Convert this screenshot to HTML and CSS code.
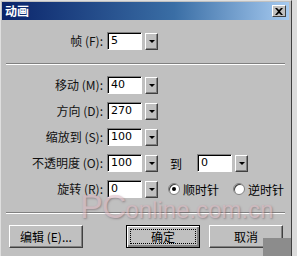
FILE: index.html
```html
<!DOCTYPE html>
<html lang="zh-CN">
<head>
    <meta charset="UTF-8">
    <title>动画</title>
    <link rel="stylesheet" href="styles.css">
</head>
<body>
    <div class="window">
        <div class="titlebar">
            <span class="title">动画</span>
            <button class="close-btn">
                <svg width="8" height="7" viewBox="0 0 8 7"><path d="M0 0h2l2 2 2-2h2L5 3.5 8 7H6L4 5 2 7H0l3-3.5z" fill="#000"/></svg>
            </button>
        </div>

        <div class="body">
            <div class="form top">
                <label class="lbl">帧 (F):</label>
                <div class="field"><div class="input">5</div><div class="drop"></div></div>
            </div>

            <div class="sep"></div>

            <div class="form rows">
                <label class="lbl">移动 (M):</label>
                <div class="field"><div class="input">40</div><div class="drop"></div></div>

                <label class="lbl">方向 (D):</label>
                <div class="field"><div class="input">270</div><div class="drop"></div></div>

                <label class="lbl">缩放到 (S):</label>
                <div class="field"><div class="input">100</div><div class="drop"></div></div>

                <label class="lbl">不透明度 (O):</label>
                <div class="field">
                    <div class="input">100</div><div class="drop"></div>
                    <span class="to">到</span>
                    <div class="input">0</div><div class="drop"></div>
                </div>

                <label class="lbl">旋转 (R):</label>
                <div class="field">
                    <div class="input">0</div><div class="drop"></div>
                    <span class="radio on"></span><span class="radio-text">顺时针</span>
                    <span class="radio"></span><span class="radio-text">逆时针</span>
                </div>
            </div>

            <div class="sep"></div>

            <div class="buttons">
                <button class="btn">编辑 (E)...</button>
                <div class="spacer"></div>
                <button class="btn default"><span class="focus">确定</span></button>
                <button class="btn">取消</button>
            </div>
        </div>

        <div class="watermark"><span class="pc">PC</span>online.com.cn</div>
        <div class="grip"></div>
    </div>
</body>
</html>
```

FILE: styles.css
```css
* {
    box-sizing: border-box;
}

body {
    margin: 0;
    padding: 0;
    background-color: #dcdcdc;
    font-family: "Noto Sans CJK SC", "DejaVu Sans", sans-serif;
    font-size: 12px;
    color: #000;
}

.window {
    width: 292px;
    height: 256px;
    background-color: #c0c0c0;
    border-top: 1px solid #dfdfdf;
    border-left: 1px solid #dfdfdf;
    border-right: 1px solid #404040;
    padding: 1px 2px 0 1px;
    position: relative;
    overflow: hidden;
}

.titlebar {
    height: 18px;
    background: linear-gradient(to right, #0a246a, #3a6ea5 60%, #a6caf0);
    display: flex;
    align-items: center;
    justify-content: space-between;
    padding: 0 3px 0 3px;
}

.title {
    color: #fff;
    font-weight: bold;
    font-size: 12px;
    line-height: 18px;
}

.close-btn {
    width: 14px;
    height: 12px;
    padding: 0;
    background-color: #c0c0c0;
    border: 1px solid;
    border-color: #fff #404040 #404040 #fff;
    display: flex;
    align-items: center;
    justify-content: center;
}

.body {
    padding: 12px 6px 0 6px;
}

.form {
    display: grid;
    grid-template-columns: 95px 1fr;
    column-gap: 4px;
    align-items: center;
}

.rows {
    row-gap: 8px;
}

.lbl {
    text-align: right;
    line-height: 18px;
    white-space: nowrap;
    color: #111;
}

.field {
    display: flex;
    align-items: center;
    height: 18px;
    white-space: nowrap;
}

.input {
    flex: none;
    width: 35px;
    height: 18px;
    background-color: #fff;
    border: 1px solid;
    border-color: #808080 #fff #fff #808080;
    box-shadow: inset 1px 1px 0 #000;
    font-family: "DejaVu Sans", sans-serif;
    font-size: 11px;
    line-height: 16px;
    padding-left: 3px;
}

.drop {
    flex: none;
    width: 13px;
    height: 17px;
    margin-left: 3px;
    background-color: #c0c0c0;
    border: 1px solid;
    border-color: #fff #404040 #404040 #fff;
    box-shadow: inset -1px -1px 0 #808080;
    position: relative;
}

.drop::after {
    content: "";
    position: absolute;
    left: 3px;
    top: 6px;
    border-left: 3px solid transparent;
    border-right: 3px solid transparent;
    border-top: 3px solid #000;
}

.to {
    margin: 0 15px 0 12px;
}

.radio {
    flex: none;
    width: 12px;
    height: 12px;
    border-radius: 50%;
    background-color: #fff;
    border: 1px solid #808080;
    box-shadow: inset 1px 1px 0 #404040;
    margin-left: 10px;
    margin-right: 3px;
    position: relative;
}

.radio.on::after {
    content: "";
    position: absolute;
    left: 3px;
    top: 3px;
    width: 4px;
    height: 4px;
    border-radius: 50%;
    background-color: #000;
}

.radio-text {
    margin-right: 4px;
}

.sep {
    height: 2px;
    border-top: 1px solid #808080;
    border-bottom: 1px solid #fff;
    margin: 13px -2px 11px -2px;
}

.rows + .sep {
    margin: 14px -2px 11px -2px;
}

.buttons {
    display: flex;
    gap: 9px;
    padding-left: 1px;
}

.spacer {
    flex: 1;
}

.btn {
    width: 74px;
    height: 23px;
    padding: 0;
    background-color: #c0c0c0;
    border: 1px solid;
    border-color: #fff #404040 #404040 #fff;
    box-shadow: inset -1px -1px 0 #808080;
    font-family: "Noto Sans CJK SC", "DejaVu Sans", sans-serif;
    font-size: 12px;
    color: #000;
}

.btn.default {
    border: 1px solid #000;
    box-shadow: inset 1px 1px 0 #fff, inset -2px -2px 0 #808080;
    padding: 3px;
}

.focus {
    display: block;
    height: 100%;
    border: 1px dotted #000;
    line-height: 13px;
}

/* 水印 */
.watermark {
    position: absolute;
    left: 79px;
    top: 188px;
    line-height: 34px;
    font-family: "Liberation Sans", sans-serif;
    font-size: 24px;
    color: #d8b4bd;
    text-shadow: 1px 1px 2px #6f6066;
    opacity: 0.55;
    pointer-events: none;
    white-space: nowrap;
}

.watermark .pc {
    font-size: 34px;
    letter-spacing: -1px;
}

.grip {
    position: absolute;
    right: -2px;
    bottom: 0;
    width: 30px;
    height: 18px;
    background-color: #8c8c8c;
}
```
